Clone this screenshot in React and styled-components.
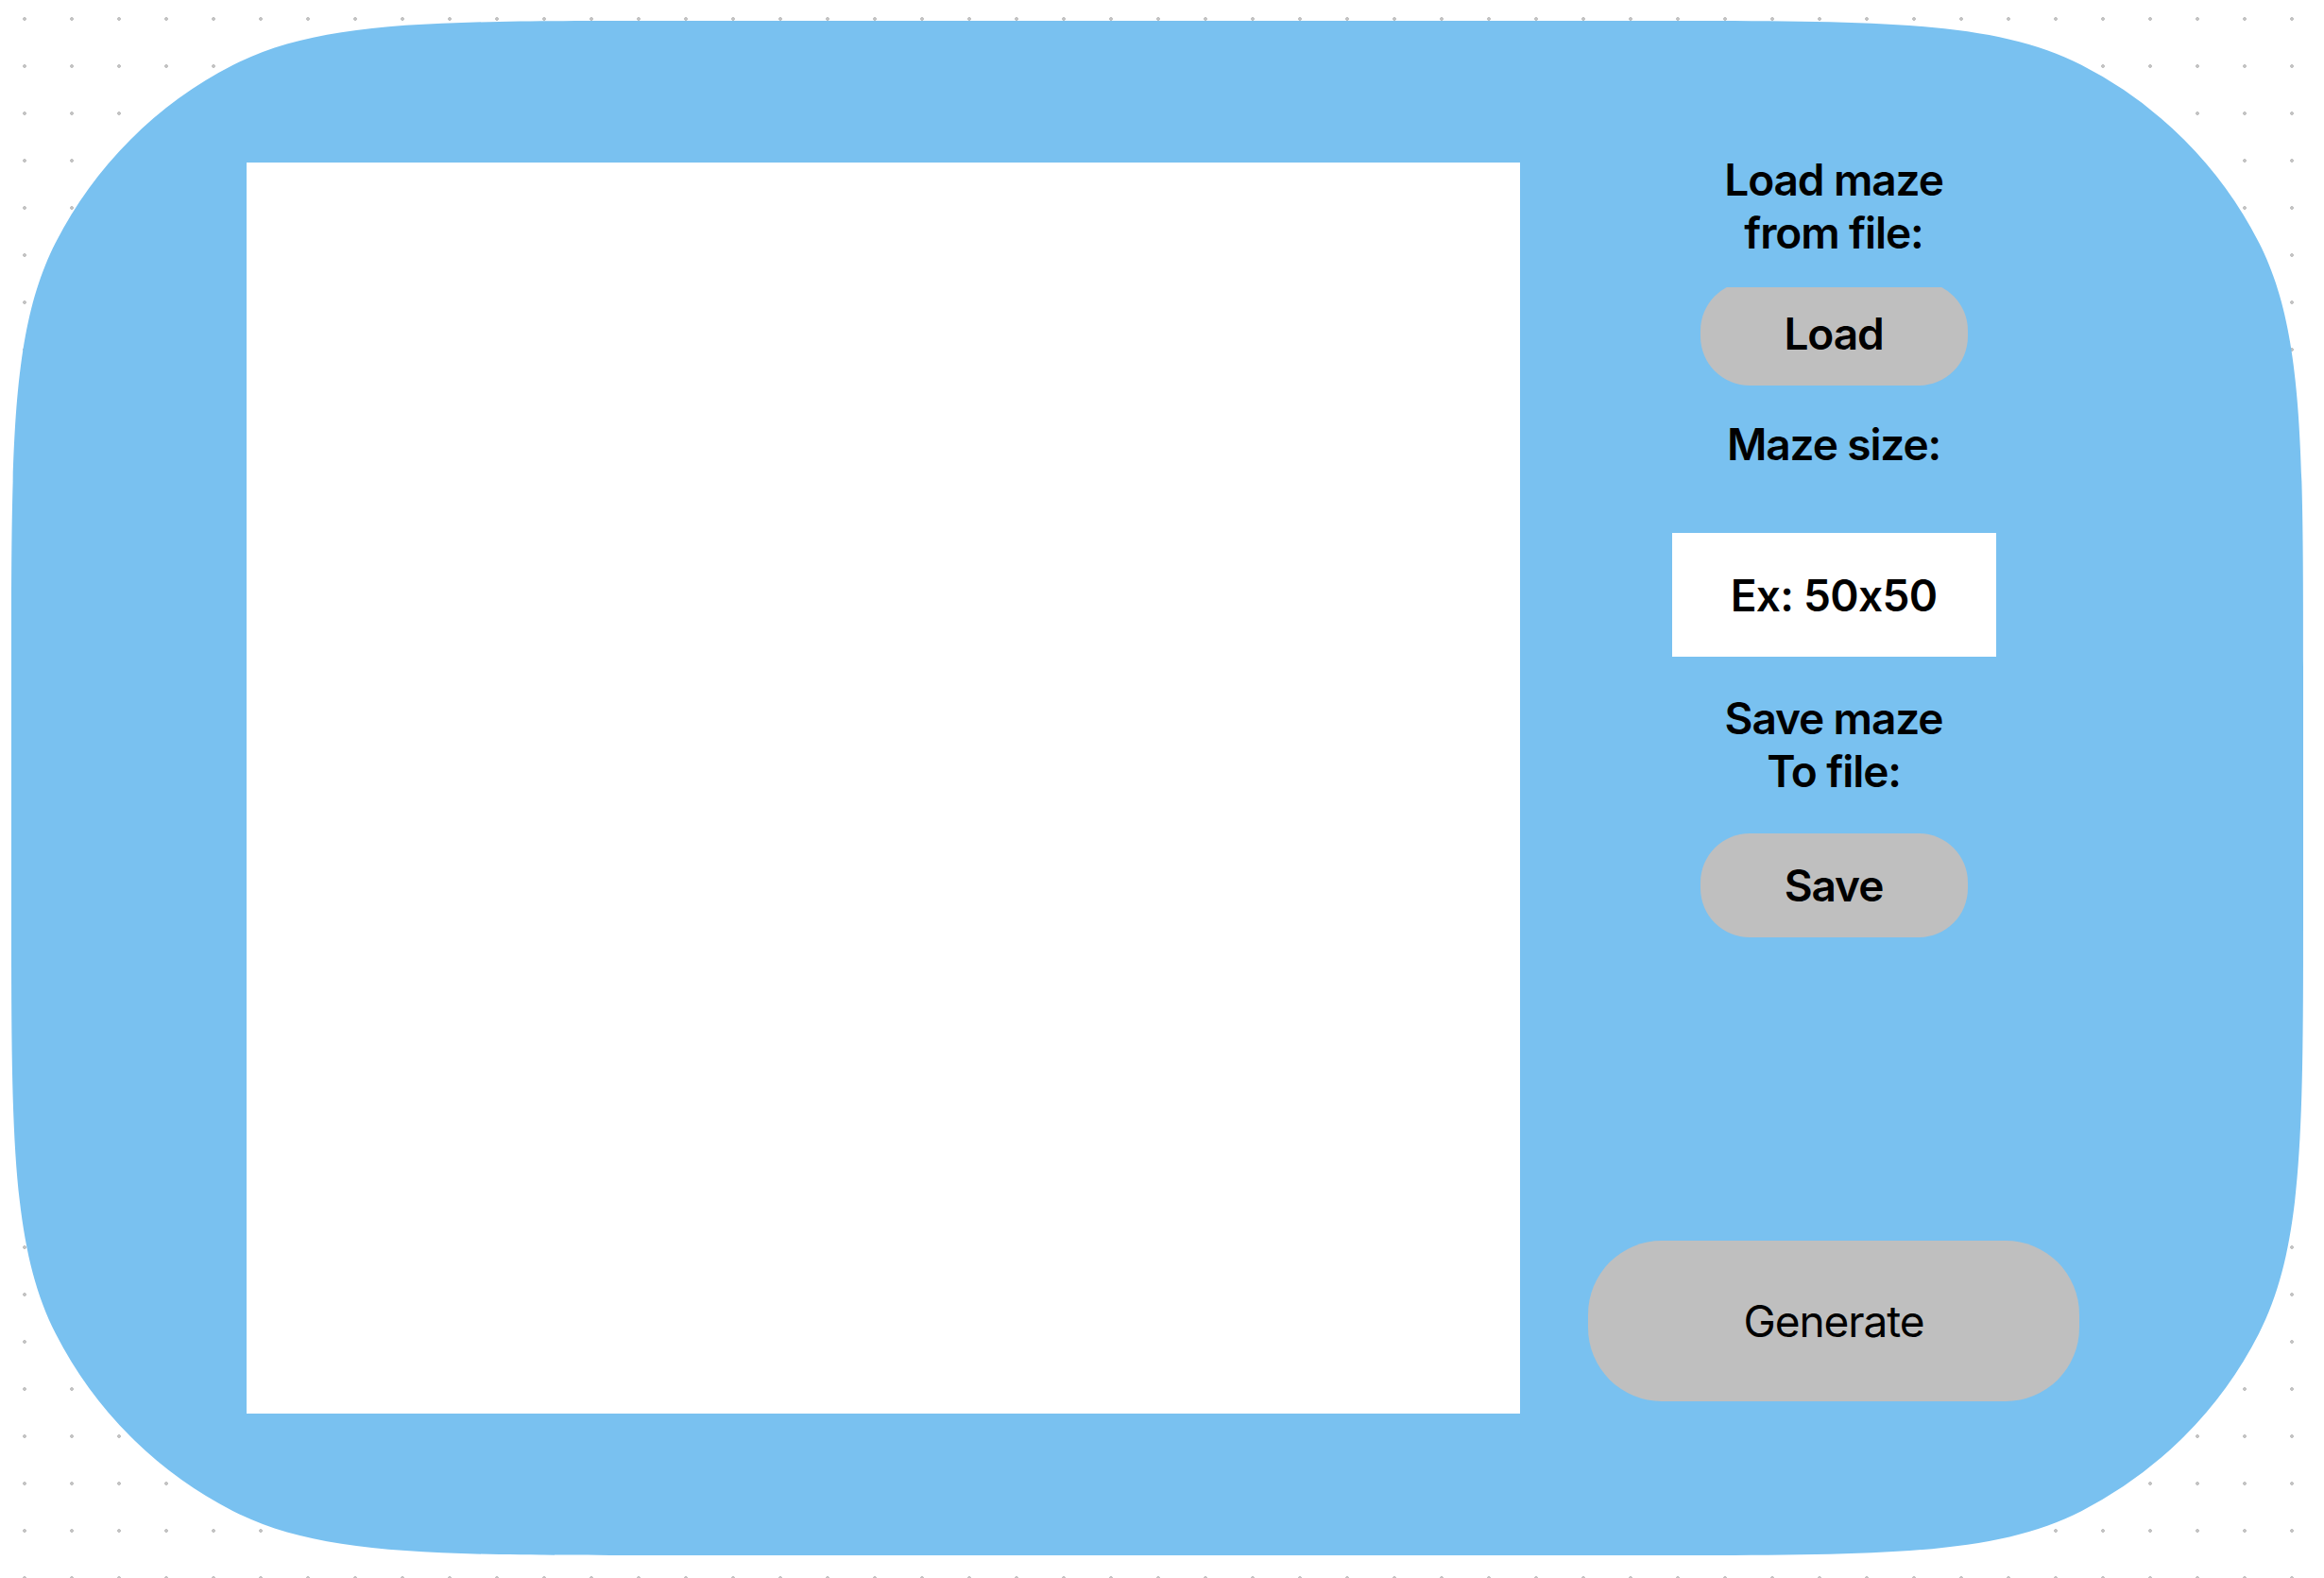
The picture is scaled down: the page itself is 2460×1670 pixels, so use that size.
import React from "react";
import styled, { createGlobalStyle } from "styled-components";

const GlobalStyle = createGlobalStyle`
  html, body {
    margin: 0;
    padding: 0;
    background: #ffffff;
  }
  body {
    font-family: Inter, "Noto Sans", "Liberation Sans", sans-serif;
  }
`;

/* Continuous ("smoothed") rounded-rectangle outline, like a design-tool squircle. */
function squirclePath(width, height, radius, smoothing) {
  const r = radius;
  const p = (1 + smoothing) * r;
  const rad = (deg) => (deg * Math.PI) / 180;
  const arcMeasure = 90 * (1 - smoothing);
  const arc = Math.sin(rad(arcMeasure / 2)) * r * Math.SQRT2;
  const alpha = (90 - arcMeasure) / 2;
  const p3p4 = r * Math.tan(rad(alpha / 2));
  const beta = 45 * smoothing;
  const c = p3p4 * Math.cos(rad(beta));
  const d = c * Math.tan(rad(beta));
  const b = (p - arc - c - d) / 3;
  const a = 2 * b;
  const f = (n) => n.toFixed(2);
  return [
    `M ${f(width - p)} 0`,
    `c ${f(a)} 0 ${f(a + b)} 0 ${f(a + b + c)} ${f(d)}`,
    `a ${r} ${r} 0 0 1 ${f(arc)} ${f(arc)}`,
    `c ${f(d)} ${f(c)} ${f(d)} ${f(b + c)} ${f(d)} ${f(a + b + c)}`,
    `L ${width} ${f(height - p)}`,
    `c 0 ${f(a)} 0 ${f(a + b)} ${f(-d)} ${f(a + b + c)}`,
    `a ${r} ${r} 0 0 1 ${f(-arc)} ${f(arc)}`,
    `c ${f(-c)} ${f(d)} ${f(-(b + c))} ${f(d)} ${f(-(a + b + c))} ${f(d)}`,
    `L ${f(p)} ${height}`,
    `c ${f(-a)} 0 ${f(-(a + b))} 0 ${f(-(a + b + c))} ${f(-d)}`,
    `a ${r} ${r} 0 0 1 ${f(-arc)} ${f(-arc)}`,
    `c ${f(-d)} ${f(-c)} ${f(-d)} ${f(-(b + c))} ${f(-d)} ${f(-(a + b + c))}`,
    `L 0 ${f(p)}`,
    `c 0 ${f(-a)} 0 ${f(-(a + b))} ${f(d)} ${f(-(a + b + c))}`,
    `a ${r} ${r} 0 0 1 ${f(arc)} ${f(-arc)}`,
    `c ${f(c)} ${f(-d)} ${f(b + c)} ${f(-d)} ${f(a + b + c)} ${f(-d)}`,
    "Z",
  ].join(" ");
}

const PANEL_W = 2426;
const PANEL_H = 1624;
const panelOutline = squirclePath(PANEL_W, PANEL_H, 430, 0.6);

const Page = styled.div`
  width: 2460px;
  height: 1670px;
  box-sizing: border-box;
  padding: 22px 22px 24px 12px;
  background-color: #ffffff;
  background-image: radial-gradient(circle, #c3c3c3 1.6px, transparent 2.2px);
  background-size: 50px 50px;
  background-position: 1px -5px;
`;

const Panel = styled.main`
  width: ${PANEL_W}px;
  height: ${PANEL_H}px;
  box-sizing: border-box;
  background: #79c1f0;
  clip-path: path("${panelOutline}");
  display: flex;
  align-items: stretch;
  gap: 72px;
  padding: 150px 237px 150px 249px;
`;

const MazeCanvas = styled.div`
  width: 1348px;
  flex: none;
  background: #ffffff;
`;

const Sidebar = styled.aside`
  width: 520px;
  flex: none;
  display: flex;
  flex-direction: column;
  align-items: center;
`;

const Label = styled.h2`
  margin: ${(p) => p.$top}px 0 0 0;
  font-family: Inter, "Noto Sans", sans-serif;
  font-size: 46px;
  line-height: 56px;
  font-weight: 600;
  color: #000000;
  text-align: center;
  letter-spacing: -1.1px;
`;

const Clip = styled.div`
  margin-top: ${(p) => p.$top}px;
  height: ${(p) => p.$height}px;
  overflow: hidden;
  display: flex;
  align-items: flex-end;
`;

const PillButton = styled.button`
  flex: none;
  margin-top: ${(p) => p.$top || 0}px;
  margin-bottom: ${(p) => p.$bottom || 0}px;
  width: ${(p) => p.$width}px;
  height: ${(p) => p.$height}px;
  border: none;
  border-radius: ${(p) => p.$radius}px;
  background: #bfbfbf;
  color: #000000;
  font-family: Inter, "Noto Sans", sans-serif;
  font-size: 46px;
  font-weight: ${(p) => p.$weight};
  letter-spacing: -1.1px;
  padding: 0;
  cursor: pointer;
`;

const SizeInput = styled.input`
  margin-top: 66px;
  width: 343px;
  height: 131px;
  box-sizing: border-box;
  border: none;
  outline: none;
  background: #ffffff;
  font-family: Inter, "Noto Sans", sans-serif;
  font-size: 46px;
  font-weight: 600;
  letter-spacing: -0.7px;
  text-align: center;
  color: #000000;
  padding: 0;
  &::placeholder {
    color: #000000;
    opacity: 1;
  }
`;

const Spacer = styled.div`
  flex: 1;
`;

export default function App() {
  return (
    <>
      <GlobalStyle />
      <Page>
        <Panel>
          <MazeCanvas />
          <Sidebar>
            <Label $top={-10}>
              Load maze
              <br />
              from file:
            </Label>
            <Clip $top={30} $height={104}>
              <PillButton $width={283} $height={110} $radius={52} $weight={600}>
                Load
              </PillButton>
            </Clip>
            <Label $top={34}>Maze size:</Label>
            <SizeInput placeholder="Ex: 50x50" />
            <Label $top={37}>
              Save maze
              <br />
              To file:
            </Label>
            <PillButton $top={38} $width={283} $height={110} $radius={52} $weight={600}>
              Save
            </PillButton>
            <Spacer />
            <PillButton $width={520} $height={170} $radius={78} $weight={400} $bottom={13}>
              Generate
            </PillButton>
          </Sidebar>
        </Panel>
      </Page>
    </>
  );
}
